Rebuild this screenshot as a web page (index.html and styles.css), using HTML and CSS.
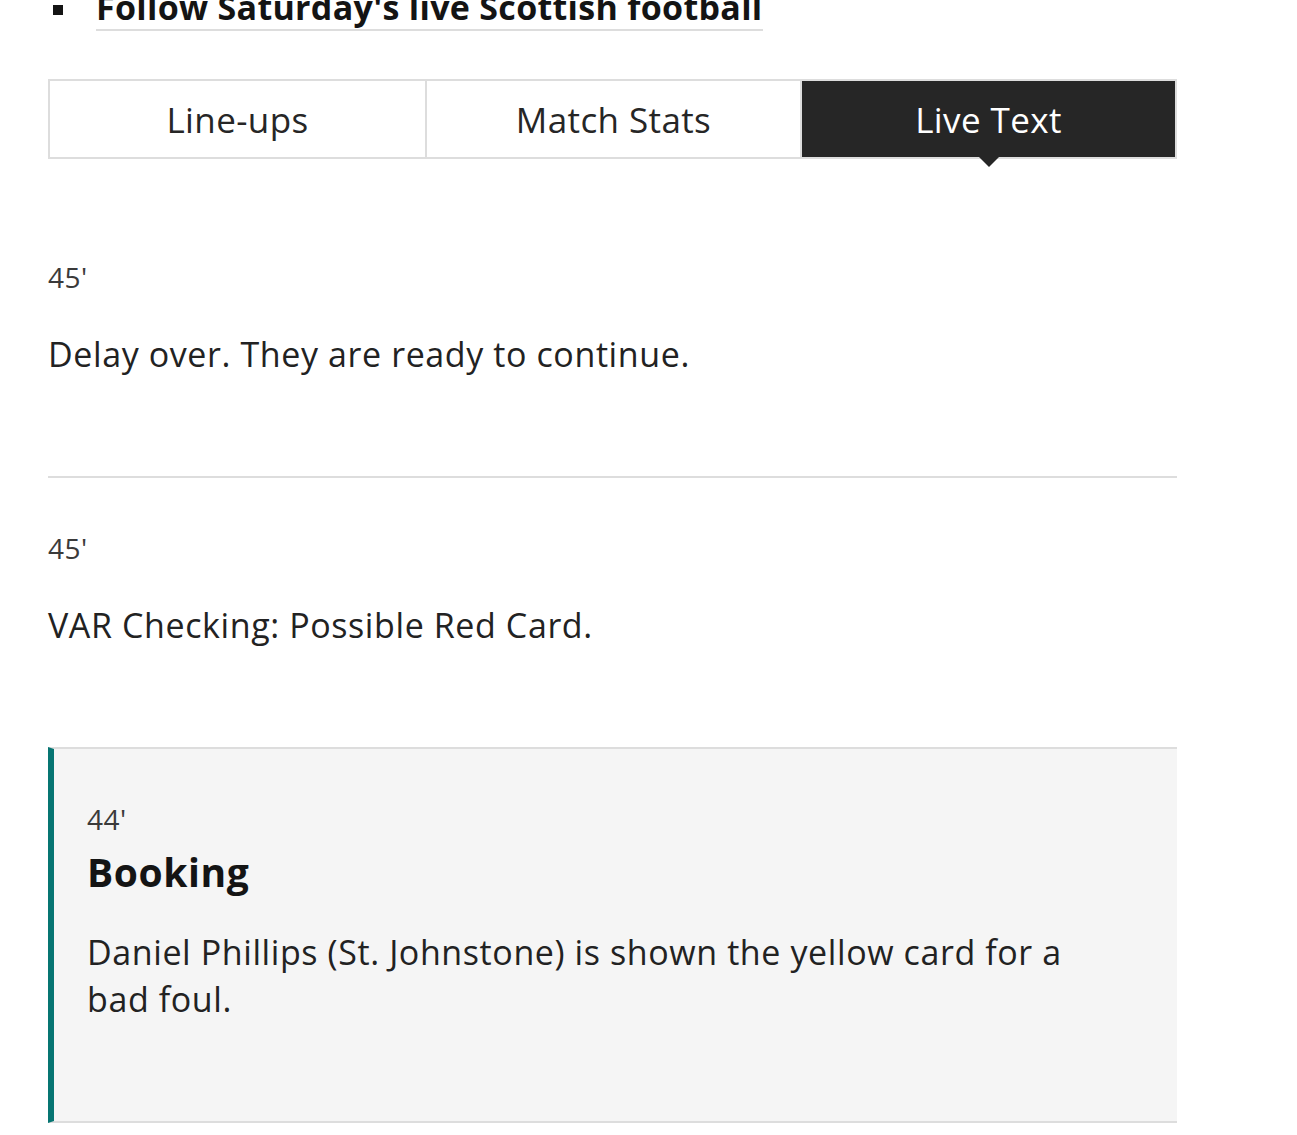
FILE: index.html
```html
<!DOCTYPE html>
<html lang="en">
<head>
  <meta charset="UTF-8" />
  <meta name="viewport" content="width=device-width, initial-scale=1.0"/>
  <title>Live Text</title>
  <link rel="stylesheet" href="styles.css">
</head>
<body>

  <div class="page">
    <!-- Related links -->
    <ul class="links">
      <li><a href="#">Follow Saturday's live Scottish football</a></li>
    </ul>

    <!-- Tabs -->
    <nav class="tabs">
      <a href="#" class="tab">Line-ups</a>
      <a href="#" class="tab">Match Stats</a>
      <a href="#" class="tab active">Live Text</a>
    </nav>

    <!-- Commentary -->
    <ol class="feed">
      <li class="event">
        <span class="time">45'</span>
        <p class="text">Delay over. They are ready to continue.</p>
      </li>
      <li class="event">
        <span class="time">45'</span>
        <p class="text">VAR Checking: Possible Red Card.</p>
      </li>
      <li class="event key">
        <span class="time">44'</span>
        <h3 class="title">Booking</h3>
        <p class="text">Daniel Phillips (St. Johnstone) is shown the yellow card for a bad foul.</p>
      </li>
    </ol>
  </div>

</body>
</html>
```

FILE: styles.css
```css
body, html {
  margin: 0;
  padding: 0;
  background: #fff;
}

body {
  font-family: "Open Sans", "Noto Sans", sans-serif;
  color: #222;
}

.page {
  width: 1129px;
  margin-left: 48px;
}

.links {
  list-style: none;
  margin: -15px 0 0 0;
  padding: 0;
}

.links li {
  display: flex;
  align-items: flex-start;
  gap: 33px;
}

.links li::before {
  content: "";
  width: 10px;
  height: 10px;
  margin: 20px 0 0 5px;
  background: #141414;
  flex: none;
}

.links a {
  font-size: 34px;
  font-weight: 700;
  line-height: 44px;
  letter-spacing: 0.3px;
  color: #141414;
  text-decoration: none;
  border-bottom: 2px solid #ddd;
}

.tabs {
  display: grid;
  grid-template-columns: repeat(3, 1fr);
  margin-top: 48px;
  border: 2px solid #ddd;
  height: 76px;
}

.tab {
  display: flex;
  align-items: center;
  justify-content: center;
  font-size: 35px;
  letter-spacing: 0.4px;
  color: #262626;
  text-decoration: none;
  border-left: 2px solid #ddd;
  position: relative;
}

.tab:first-child {
  border-left: none;
}

.tab.active {
  background: #262626;
  color: #fff;
}

.tab.active::after {
  content: "";
  position: absolute;
  left: 50%;
  bottom: -10px;
  margin-left: -10px;
  border-left: 10px solid transparent;
  border-right: 10px solid transparent;
  border-top: 10px solid #262626;
}

.feed {
  list-style: none;
  margin: 48px 0 0 0;
  padding: 0;
}

.event {
  padding: 54px 0 98px 0;
  border-top: 2px solid #ddd;
}

.event:first-child {
  border-top: none;
}

.time {
  display: block;
  font-size: 28px;
  line-height: 32px;
  letter-spacing: 0.5px;
  color: #3a3a3a;
}

.text {
  margin: 38px 0 0 0;
  font-size: 34px;
  line-height: 47px;
  letter-spacing: 0.6px;
  color: #222;
}

.event.key {
  background: #f5f5f5;
  border-left: 6px solid #067572;
  border-bottom: 2px solid #ddd;
  padding-left: 33px;
  padding-right: 80px;
  padding-bottom: 98px;
}

.title {
  margin: 13px 0 0 0;
  font-size: 39px;
  line-height: 48px;
  letter-spacing: 0.6px;
  font-weight: 700;
  color: #141414;
}

.key .text {
  margin-top: 33px;
}
```
